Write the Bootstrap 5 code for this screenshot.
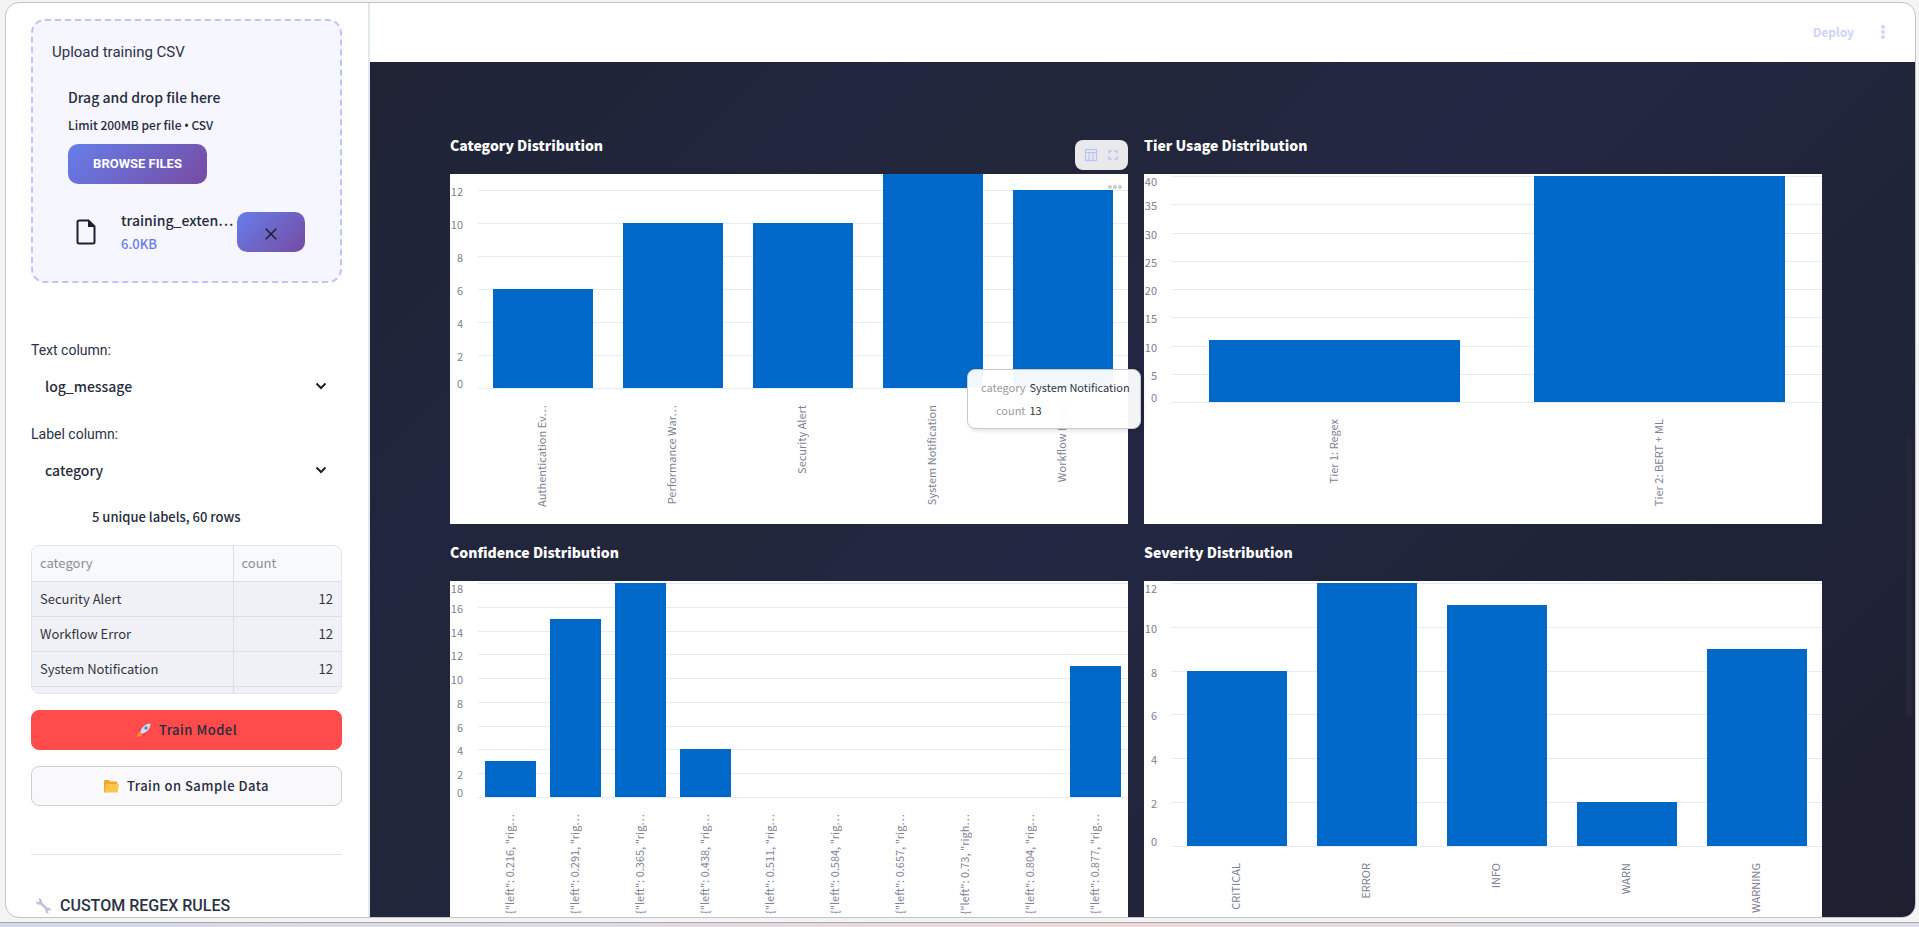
<!DOCTYPE html>
<html lang="en">
<head>
<meta charset="utf-8">
<meta name="viewport" content="width=device-width, initial-scale=1">
<title>Log Classification</title>
<link href="https://cdn.jsdelivr.net/npm/bootstrap@5.3.0/dist/css/bootstrap.min.css" rel="stylesheet">
<style>
  :root { --ui: "Noto Sans CJK SC", "Noto Sans", sans-serif; --tech: "Roboto", "Noto Sans", sans-serif; --ink: #262b3d; --dim: #7d8194; }
  body { font-family: var(--ui); font-size: 14px; line-height: 20px; color: var(--ink); background: #f4f4f4; }
  .shell { border: 1px solid #c4c4c4; border-radius: 14px; margin: 2px 3px 4px 5px; background: #fff; min-height: 0; }
  .taskstrip { height: 5px; border-top: 1px solid #a8a8ac; background: linear-gradient(90deg, #d3d9e6, #dcdbe4 25%, #ecd9da 58%, #dfdde3 80%, #dcdde6); }
  .side { width: 364px; border-right: 2px solid #e2e8f0; padding: 16px 26px 0 25px; }
  .dropzone { border: 2px dashed #bcc6f8; border-radius: 14px; background: #f5f6ff; height: 264px; padding: 20px 20px 0 19px; }
  .tech { font-family: var(--tech); font-size: 14px; line-height: 22px; color: #2b3247; }
  .tech-lg { font-size: 15px; }
  .fs-note { font-size: 12px; }
  .fw-mid { font-weight: 500; }
  .dot { font-family: "Noto Sans", sans-serif; }
  .grad { background: linear-gradient(135deg, #667eea, #764ba2); border: 0; border-radius: 10px; height: 40px; }
  .browse { width: 139px; font-family: var(--tech); font-size: 13px; font-weight: 700; color: #fff; }
  .remove { width: 68px; color: #1c2130; }
  .filerow { margin-top: 26px; }
  .fileinfo { width: 116px; margin-left: 1px; }
  .filesize { color: #667eea; font-size: 13px; }
  .pick { appearance: none; border: 0; background: transparent; height: 38px; width: 100%; padding: 0 14px; font-weight: 500; color: var(--ink); }
  .chev { grid-area: 1 / 1; justify-self: end; margin-right: 15px; pointer-events: none; }
  .grid-stack > * { grid-area: 1 / 1; }
  .fields { padding-top: 56px; display: grid; gap: 18px; }
  .field { display: grid; gap: 6px; }
  .summary { padding-left: 61px; margin: 18px 0; font-size: 13px; }
  .frame { height: 149px; border: 1px solid #e4e5ea; border-radius: 8px; }
  .counts { font-size: 13px; line-height: 16px; table-layout: fixed; margin: 0; }
  .counts th, .counts td { height: 35px; padding: 0 8px; vertical-align: middle; border-bottom: 1px solid #dcdee4; color: #31333f; background: #f0f1f6; }
  .counts th { font-weight: 400; color: #8b8d97; background: #f8f9fb; }
  .counts th:first-child, .counts td:first-child { width: 201px; border-right: 1px solid #dcdee4; }
  .act { height: 40px; border-radius: 8px; font-weight: 500; font-size: 13px; color: var(--ink); letter-spacing: .5px; }
  .act-red { background: #ff4b4b; border: 1px solid #ff4b4b; }
  .act-plain { background: #f9f9fc; border: 1px solid #cfd0d5; }
  .rule { border-top: 1px solid #e0e5ee; margin: 48px 0 41px; }
  .section-title { font-size: 16px; font-weight: 500; line-height: 20px; }
  .topbar { height: 59px; color: #ccd4f8; padding: 0 27px 2px 0; }
  .linkish { color: #ccd4f8; border: 0; background: none; padding: 0; font-size: 12px; font-weight: 700; }
  .board { background: linear-gradient(135deg, #1f2334 0%, #22263e 22%, #212639 32%, #242743 48%, #20253a 66%, #1e2030 100%); padding: 71px 93px 0 80px; min-height: 0; }
  .panel-title { font-size: 14px; font-weight: 900; line-height: 24px; color: #fff; margin: 0 0 17px; }
  .panels { display: grid; grid-template-columns: 1fr 1fr; gap: 16px; }
  .plotcard { background: #fff; height: 350px; font-size: 11px; line-height: 14px; color: var(--dim); overflow: hidden; }
  .h-cat { height: 215px; } .h-tier { height: 229px; padding-top: 2px; }
  .h-conf { height: 217px; padding-top: 2px; } .h-sev { height: 266px; padding-top: 2px; }
  .tickrow { flex: 2 1 0; display: flex; gap: 15px; min-height: 0; }
  .tickrow > span { width: 13px; text-align: right; margin-top: -6px; height: 14px; }
  .tickrow > i { flex: 1; border-top: 1px solid #e6eaf1; }
  .tickrow.half { flex-grow: 1; }
  .tickrow.first > span { margin-top: -2px; }
  .tickrow.zero { flex: 0 0 1px; }
  .tickrow.zero > span { margin-top: -12px; }
  .bars { margin-left: 28px; display: flex; align-items: flex-end; padding-bottom: 1px; }
  .bars > div { flex: 1; height: 100%; display: flex; align-items: flex-end; justify-content: center; }
  .bars > div > b { width: 77%; height: calc(var(--v) / var(--max) * 100%); background: #0068c9; }
  .names { margin: 16px 2px 0 26px; display: flex; }
  .names > div { flex: 1; display: flex; justify-content: center; align-items: flex-start; }
  .names span { writing-mode: vertical-rl; text-orientation: sideways; transform: rotate(180deg); white-space: nowrap; }
  .tools { right: 0; top: -34px; width: 53px; height: 30px; border-radius: 8px; background: #e9e9ec; }
  .tools button { border: 0; background: none; padding: 0; line-height: 0; color: #b9c3f3; }
  .more { right: 5px; top: 11px; line-height: 0; border: 0; background: none; padding: 0; }
  .tip { left: 517px; top: 195px; width: 174px; height: 60px; border: 1px solid #c8cacc; border-radius: 8px; background: rgba(255,255,255,.95); box-shadow: 2px 2px 4px rgba(0,0,0,.12); padding: 10px 12px 0 13px; color: #9a9ba3; z-index: 2; font-size: 11px; line-height: 14px; }
  .tip td { padding: 0 4px 9px 0; white-space: nowrap; }
  .tip td:last-child { color: #31333f; padding-right: 0; }
  .scrollpill { right: 3px; top: 375px; width: 6px; height: 280px; border-radius: 3px; background: #26283a; }
</style>
</head>
<body class="vh-100 overflow-hidden d-flex flex-column">
<div class="shell flex-fill d-flex overflow-hidden">

  <aside class="side flex-shrink-0 overflow-hidden">
    <section class="dropzone">
      <label class="tech tech-lg d-block" for="browse">Upload training CSV</label>
      <div class="ps-3 pt-3 mt-1">
        <div class="fw-mid pt-1">Drag and drop file here</div>
        <div class="fw-mid fs-note pt-2">Limit 200MB per file <span class="dot">•</span> CSV</div>
        <button id="browse" class="grad browse mt-2" type="button">BROWSE FILES</button>
        <div class="d-flex align-items-center filerow">
          <svg class="ms-2 me-4" width="20" height="26" viewBox="0 0 20 26" fill="none" stroke="#1c2130" stroke-width="2"><path d="M2.500 1.500H12.500L18.500 7.500V23a1.500 1.500 0 0 1-1.500 1.500H3A1.500 1.500 0 0 1 1.500 23V3A1.500 1.500 0 0 1 3 1.500Z"/><path d="M12 1v7h7Z" fill="#1c2130" stroke="none"/></svg>
          <div class="fileinfo">
            <div class="fw-mid">training_exten…</div>
            <div class="fw-mid filesize pt-1">6.0KB</div>
          </div>
          <button class="grad remove flex-shrink-0" type="button" aria-label="Remove file"><svg width="12" height="12" viewBox="0 0 12 12" stroke="currentColor" stroke-width="1.600"><path d="M.7.7l10.600 10.600M11.300.7L.7 11.300"/></svg></button>
        </div>
      </div>
    </section>

    <div class="fields">
      <div class="field">
        <label class="tech" for="textcol">Text column:</label>
        <div class="d-grid grid-stack align-items-center">
          <select id="textcol" class="pick"><option>log_message</option></select>
          <svg class="chev" width="12" height="8" viewBox="0 0 12 8" fill="none" stroke="#1c2130" stroke-width="2"><path d="M1.500 1.500L6 6l4.500-4.500"/></svg>
        </div>
      </div>
      <div class="field">
        <label class="tech" for="labelcol">Label column:</label>
        <div class="d-grid grid-stack align-items-center">
          <select id="labelcol" class="pick"><option>category</option></select>
          <svg class="chev" width="12" height="8" viewBox="0 0 12 8" fill="none" stroke="#1c2130" stroke-width="2"><path d="M1.500 1.500L6 6l4.500-4.500"/></svg>
        </div>
      </div>
    </div>
    <p class="fw-mid summary">5 unique labels, 60 rows</p>

    <div class="frame overflow-hidden">
      <table class="counts w-100">
        <thead><tr><th scope="col">category</th><th scope="col">count</th></tr></thead>
        <tbody>
          <tr><td>Security Alert</td><td class="text-end">12</td></tr>
          <tr><td>Workflow Error</td><td class="text-end">12</td></tr>
          <tr><td>System Notification</td><td class="text-end">12</td></tr>
          <tr><td></td><td></td></tr>
        </tbody>
      </table>
    </div>

    <button class="act act-red w-100 mt-3 d-flex align-items-center justify-content-center gap-2" type="button">
      <svg width="15" height="15" viewBox="0 0 15 15"><path d="M1 14l1.500-5 3.500 3.500Z" fill="#ffa31a"/><path d="M3 7l3-1.500 4 4L8 13l-1.500-2.500L4 9Z" fill="#d8345f"/><path d="M14.500.5C10 .5 6 3.500 4 9l2 2c5.500-2 8.500-6 8.500-10.500Z" fill="#dcd8ea"/><circle cx="10" cy="5" r="1.700" fill="#3d8fd1"/></svg>
      Train Model</button>
    <button class="act act-plain w-100 mt-3 d-flex align-items-center justify-content-center gap-2" type="button">
      <svg width="15" height="13" viewBox="0 0 15 13"><path d="M0 1.200Q0 0 1.200 0H5l1.500 1.500h6Q13.500 1.500 13.500 3v8L0 12.500Z" fill="#f0a92e"/><path d="M2.500 4H15l-1.500 8.500H.5Z" fill="#ffc44d"/></svg>
      Train on Sample Data</button>
    <div class="rule"></div>
    <h2 class="tech section-title mb-0 d-flex align-items-center gap-2">
      <svg class="ms-1" width="17" height="16" viewBox="0 0 16 16"><path d="M0 3l2.500 1.500L4 3 3 .5C5 0 7 1.500 6.500 4.500l5 5C14 9 16 11 15.500 13L13.500 12 12 13.500l1.500 2C11 16 9.500 14 10 11.500l-5-5C2.500 7.500 0 5.500 0 3Z" fill="#c9bddb"/></svg>
      CUSTOM REGEX RULES</h2>
  </aside>

  <div class="flex-fill d-flex flex-column overflow-hidden">
    <header class="topbar flex-shrink-0 d-flex align-items-center justify-content-end gap-4">
      <button class="linkish" type="button">Deploy</button>
      <button class="linkish lh-1" type="button" aria-label="Menu"><svg width="10" height="14" viewBox="0 0 10 14" fill="currentColor"><circle cx="5" cy="2" r="1.900"/><circle cx="5" cy="7" r="1.900"/><circle cx="5" cy="12" r="1.900"/></svg></button>
    </header>
    <main class="board flex-fill position-relative overflow-hidden">
      <div class="scrollpill position-absolute"></div>
      <div class="panels">
        <section>
          <h3 class="panel-title">Category Distribution</h3>
          <div class="position-relative">
            <div class="plotcard">
              <div class="d-grid grid-stack h-cat">
                <div class="d-flex flex-column">
                  <div class="tickrow half"></div>
                  <div class="tickrow"><span>12</span><i></i></div><div class="tickrow"><span>10</span><i></i></div><div class="tickrow"><span>8</span><i></i></div><div class="tickrow"><span>6</span><i></i></div><div class="tickrow"><span>4</span><i></i></div><div class="tickrow"><span>2</span><i></i></div><div class="tickrow zero"><span>0</span><i></i></div>
                </div>
                <div class="bars" style="--max:13"><div><b style="--v:6"></b></div><div><b style="--v:10"></b></div><div><b style="--v:10"></b></div><div><b style="--v:13"></b></div><div><b style="--v:12"></b></div></div>
              </div>
              <div class="names"><div><span>Authentication Ev…</span></div><div><span>Performance War…</span></div><div><span>Security Alert</span></div><div><span>System Notification</span></div><div><span>Workflow Error</span></div></div>
            </div>
            <div class="tools position-absolute d-flex align-items-center justify-content-center gap-2">
              <button type="button" aria-label="Show data"><svg width="14" height="14" viewBox="0 0 14 14" fill="none" stroke="currentColor" stroke-width="1.200"><rect x="1.500" y="1.500" width="11" height="11"/><path d="M1.500 4.500h11M5 4.500v8M9 4.500v8"/></svg></button>
              <button type="button" aria-label="Fullscreen"><svg width="14" height="14" viewBox="0 0 14 14" fill="none" stroke="currentColor" stroke-width="1.500"><path d="M3 5.500V3h2.500M8.500 3H11v2.500M11 8.500V11H8.500M5.500 11H3V8.500"/></svg></button>
            </div>
            <button class="more position-absolute" type="button" aria-label="Chart actions"><svg width="16" height="4" viewBox="0 0 16 4" fill="#c8c8c8"><circle cx="3" cy="2" r="1.900"/><circle cx="8" cy="2" r="1.900"/><circle cx="13" cy="2" r="1.900"/></svg></button>
            <div class="tip position-absolute">
              <table><tr><td class="text-end">category</td><td>System Notification</td></tr><tr><td class="text-end">count</td><td>13</td></tr></table>
            </div>
          </div>
        </section>

        <section>
          <h3 class="panel-title">Tier Usage Distribution</h3>
          <div class="plotcard">
            <div class="d-grid grid-stack h-tier">
              <div class="d-flex flex-column">
                <div class="tickrow first"><span>40</span><i></i></div><div class="tickrow"><span>35</span><i></i></div><div class="tickrow"><span>30</span><i></i></div><div class="tickrow"><span>25</span><i></i></div><div class="tickrow"><span>20</span><i></i></div><div class="tickrow"><span>15</span><i></i></div><div class="tickrow"><span>10</span><i></i></div><div class="tickrow"><span>5</span><i></i></div><div class="tickrow zero"><span>0</span><i></i></div>
              </div>
              <div class="bars" style="--max:40"><div><b style="--v:11"></b></div><div><b style="--v:40"></b></div></div>
            </div>
            <div class="names"><div><span>Tier 1: Regex</span></div><div><span>Tier 2: BERT + ML</span></div></div>
          </div>
        </section>

        <section>
          <h3 class="panel-title">Confidence Distribution</h3>
          <div class="plotcard">
            <div class="d-grid grid-stack h-conf">
              <div class="d-flex flex-column">
                <div class="tickrow first"><span>18</span><i></i></div><div class="tickrow"><span>16</span><i></i></div><div class="tickrow"><span>14</span><i></i></div><div class="tickrow"><span>12</span><i></i></div><div class="tickrow"><span>10</span><i></i></div><div class="tickrow"><span>8</span><i></i></div><div class="tickrow"><span>6</span><i></i></div><div class="tickrow"><span>4</span><i></i></div><div class="tickrow"><span>2</span><i></i></div><div class="tickrow zero"><span>0</span><i></i></div>
              </div>
              <div class="bars" style="--max:18"><div><b style="--v:3"></b></div><div><b style="--v:15"></b></div><div><b style="--v:18"></b></div><div><b style="--v:4"></b></div><div></div><div></div><div></div><div></div><div></div><div><b style="--v:11"></b></div></div>
            </div>
            <div class="names"><div><span>{"left": 0.216, "rig…</span></div><div><span>{"left": 0.291, "rig…</span></div><div><span>{"left": 0.365, "rig…</span></div><div><span>{"left": 0.438, "rig…</span></div><div><span>{"left": 0.511, "rig…</span></div><div><span>{"left": 0.584, "rig…</span></div><div><span>{"left": 0.657, "rig…</span></div><div><span>{"left": 0.73, "righ…</span></div><div><span>{"left": 0.804, "rig…</span></div><div><span>{"left": 0.877, "rig…</span></div></div>
          </div>
        </section>

        <section>
          <h3 class="panel-title">Severity Distribution</h3>
          <div class="plotcard">
            <div class="d-grid grid-stack h-sev">
              <div class="d-flex flex-column">
                <div class="tickrow first"><span>12</span><i></i></div><div class="tickrow"><span>10</span><i></i></div><div class="tickrow"><span>8</span><i></i></div><div class="tickrow"><span>6</span><i></i></div><div class="tickrow"><span>4</span><i></i></div><div class="tickrow"><span>2</span><i></i></div><div class="tickrow zero"><span>0</span><i></i></div>
              </div>
              <div class="bars" style="--max:12"><div><b style="--v:8"></b></div><div><b style="--v:12"></b></div><div><b style="--v:11"></b></div><div><b style="--v:2"></b></div><div><b style="--v:9"></b></div></div>
            </div>
            <div class="names"><div><span>CRITICAL</span></div><div><span>ERROR</span></div><div><span>INFO</span></div><div><span>WARN</span></div><div><span>WARNING</span></div></div>
          </div>
        </section>
      </div>
    </main>
  </div>
</div>
<div class="taskstrip flex-shrink-0"></div>
<script src="https://cdn.jsdelivr.net/npm/bootstrap@5.3.0/dist/js/bootstrap.bundle.min.js"></script>
</body>
</html>
